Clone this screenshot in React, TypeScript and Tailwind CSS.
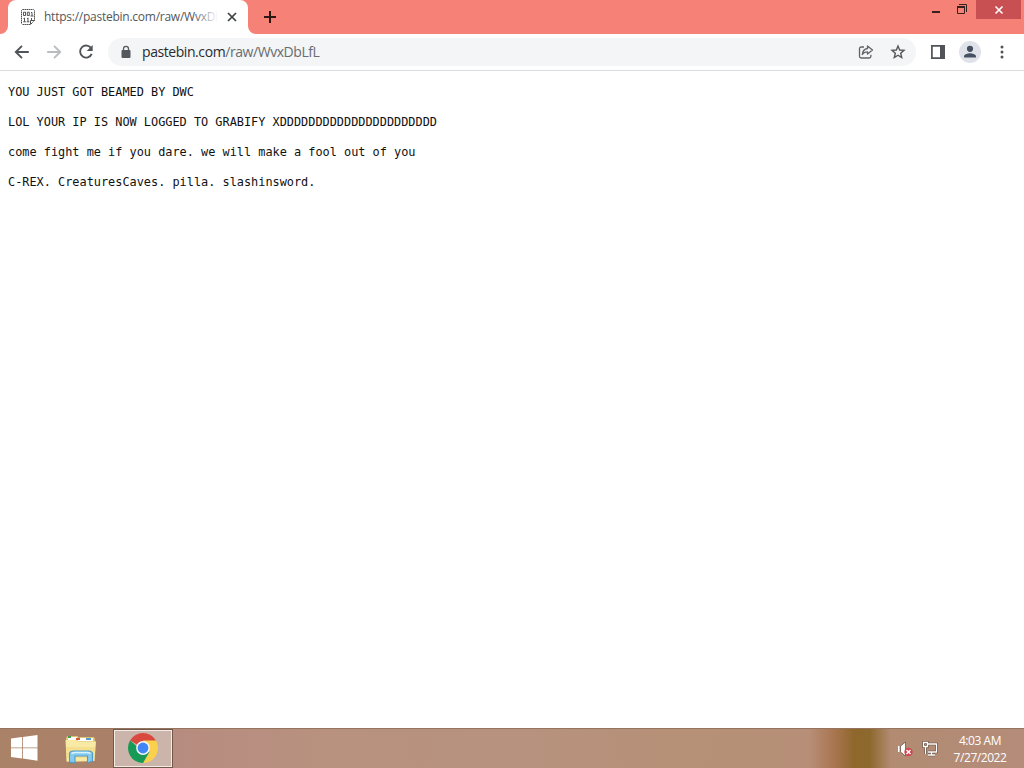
import React from 'react';

const lines = [
  'YOU JUST GOT BEAMED BY DWC',
  'LOL YOUR IP IS NOW LOGGED TO GRABIFY X' + 'D'.repeat(22),
  'come fight me if you dare. we will make a fool out of you',
  'C-REX. CreaturesCaves. pilla. slashinsword.',
];

function Favicon() {
  return (
    <svg width="16" height="18" viewBox="0 0 16 18" className="shrink-0" fill="none" stroke="#4b4b4b">
      <path d="M2.500 1.500h11l1 1v10l-4 4h-8l-1-1v-13z" strokeWidth="1" strokeDasharray="1.500 .5" />
      <path d="M10.500 16v-3.500h4" />
      <path
        d="M3.500 4.200h2v3.300h-2zM7.300 4.200h2v3.300h-2zM11 4.500h1v3.500M10.500 8h3M4.500 9.800v4M3.200 13.800h2.600M3.500 10.500h1M8 9.800v4M6.700 13.800h2.600M7 10.500h1M11.500 10v2"
        strokeWidth="0.95"
      />
    </svg>
  );
}

function TabStrip() {
  return (
    <header className="flex h-[34px] shrink-0 items-start bg-[#f58177]">
      <svg width="8" height="34" viewBox="0 0 8 34" className="shrink-0">
        <path d="M8 26a8 8 0 0 1-8 8h8z" fill="#fff" />
      </svg>
      <div className="flex h-[34px] w-[240px] shrink-0 items-center rounded-t-lg bg-white pl-3">
        <Favicon />
        <div className="relative ml-2 h-5 w-[174px] overflow-hidden whitespace-nowrap text-[12px] leading-5 tracking-[-0.25px] text-[#54575b]">
          https://pastebin.com/raw/WvxDb
          <div className="absolute inset-y-0 right-0 w-6 bg-gradient-to-r from-transparent to-white" />
        </div>
        <svg width="12" height="12" viewBox="0 0 12 12" className="ml-[8px] shrink-0" stroke="#3c4043" strokeWidth="1.7">
          <path d="M2 2l8 8M10 2l-8 8" />
        </svg>
      </div>
      <svg width="8" height="34" viewBox="0 0 8 34" className="shrink-0">
        <path d="M0 26a8 8 0 0 0 8 8H0z" fill="#fff" />
      </svg>
      <svg width="14" height="14" viewBox="0 0 14 14" className="ml-[7px] mt-[10px]" stroke="#2d1715" strokeWidth="2">
        <path d="M7 1v12M1 7h12" />
      </svg>
      <div className="ml-auto flex h-5 items-start">
        <svg width="46" height="20" viewBox="0 0 46 20" fill="none" stroke="#37201d">
          <path d="M2 12h8" strokeWidth="2" />
          <path d="M27.500 6.500h7v7h-7z" strokeWidth="1" />
          <path d="M27 7h8" strokeWidth="2" />
          <path d="M29 4.500h7.500v7.500" strokeWidth="1" />
        </svg>
        <div className="flex h-[19px] w-[45px] items-center justify-center bg-[#c95052]">
          <svg width="10" height="10" viewBox="0 0 10 10" stroke="#fff" strokeWidth="1.6">
            <path d="M1.500 1.500l7 7M8.500 1.500l-7 7" />
          </svg>
        </div>
        <div className="w-[3px]" />
      </div>
    </header>
  );
}

function Toolbar() {
  return (
    <nav className="flex h-[37px] shrink-0 items-center border-b border-[#dcdddf] bg-white pl-[13px]">
      <svg width="18" height="18" viewBox="0 0 18 18" fill="none" stroke="#505357" strokeWidth="1.9">
        <path d="M15.800 9H3M9 2.800L2.800 9 9 15.200" />
      </svg>
      <svg width="18" height="18" viewBox="0 0 18 18" className="ml-[14px]" fill="none" stroke="#babcbe" strokeWidth="1.9">
        <path d="M2.200 9H15M9 2.800L15.200 9 9 15.200" />
      </svg>
      <svg width="18" height="18" viewBox="0 0 18 18" className="ml-[14px]" fill="none" stroke="#505357" strokeWidth="1.9">
        <path d="M14.300 5.500A6 6 0 1 0 14.700 10.800" />
        <path d="M15.700 2v6H9.700z" fill="#505357" stroke="none" />
      </svg>
      <div className="ml-[13px] flex h-7 w-[808px] items-center rounded-full bg-[#f3f5f6] pl-[12px] pr-[10px]">
        <svg width="12" height="14" viewBox="0 0 12 14" fill="none">
          <rect x="1.500" y="5" width="9" height="8" rx="1" fill="#54575b" />
          <path d="M3.500 5.500V3.800a2.500 2.500 0 0 1 5 0v1.700" stroke="#54575b" strokeWidth="1.3" />
        </svg>
        <div className="ml-[10px] whitespace-nowrap text-[14px] leading-5 tracking-[-0.43px] text-[#696c70]">
          <span className="text-[#292b2e]">pastebin.com</span>/raw/WvxDbLfL
        </div>
        <svg width="16" height="16" viewBox="0 0 16 16" className="ml-auto" fill="none" stroke="#606368" strokeWidth="1.3" strokeLinejoin="round">
          <path d="M6 3H3.200A1.700 1.700 0 0 0 1.500 4.700v7.600A1.700 1.700 0 0 0 3.200 14h8a1.700 1.700 0 0 0 1.700-1.700v-1.500" />
          <path d="M9.500 2l5 4-5 4V7.800C7 7.800 5.500 8.700 4.300 10.500c.3-3 2-5.500 5.200-6z" />
        </svg>
        <svg width="16" height="16" viewBox="0 0 16 16" className="ml-4" fill="none" stroke="#55585c" strokeWidth="1.4" strokeLinejoin="miter">
          <path d="M8 2l1.650 4.050 4.350.35-3.300 2.850 1 4.250L8 11.250 4.300 13.500l1-4.250L2 6.400l4.350-.35z" />
        </svg>
      </div>
      <svg width="14" height="14" viewBox="0 0 14 14" className="ml-[15px]" fill="none">
        <path d="M.9.9h12.200v12.200H.9z" stroke="#505357" strokeWidth="1.700" />
        <path d="M9 0h5v14H9z" fill="#505357" />
      </svg>
      <svg width="22" height="22" viewBox="0 0 22 22" className="ml-[14px]">
        <circle cx="11" cy="11" r="11" fill="#dfe3e9" />
        <circle cx="11" cy="7.800" r="3.100" fill="#465063" />
        <path d="M5 16.500v-1.300c0-2 4-3 6-3s6 1 6 3v1.300z" fill="#465063" />
      </svg>
      <svg width="4" height="16" viewBox="0 0 4 16" className="ml-[19px]" fill="#505357">
        <circle cx="2" cy="3" r="1.500" />
        <circle cx="2" cy="8" r="1.500" />
        <circle cx="2" cy="13" r="1.500" />
      </svg>
    </nav>
  );
}

function WindowsIcon() {
  return (
    <svg width="28" height="28" viewBox="0 0 28 28" fill="#fff">
      <path d="M1 4.500L12 3v10.500H1zM12.800 2.900L27.500 1v12.500H12.800zM1 14.300h11v10.200L1 23zM12.800 14.300h14.700v12.500l-14.700-2.200z" />
    </svg>
  );
}

function ExplorerIcon() {
  return (
    <svg width="34" height="30" viewBox="0 0 34 30">
      <path d="M2 4l1.500-2h10l1.500 2 1-1h14l1 2-1.500 22-26 1z" fill="#dfc66e" />
      <path d="M4 3h9v3H4zM14 4h15v3H14z" fill="#fff" />
      <path d="M4 2h3v2H4z" fill="#469c51" />
      <path d="M12 4h4v2h-4z" fill="#d75a3c" />
      <path d="M22 4h5v2h-5z" fill="#509bd3" />
      <path d="M1.500 6h11l2 1.500H32L30.500 27l-28 .5z" fill="#f8e9a4" />
      <path d="M2 13h29l-.5 11H2.500z" fill="#f1d77b" opacity=".55" />
      <path d="M5.500 27v-7q0-3 4-3h15q4 0 4 3v7l-5 2v-7H11v7l-5.500-1z" fill="#86cbee" stroke="#4d9bcc" strokeWidth="1.100" />
      <path d="M8 20q0-1.500 3-1.500h12q3 0 3 1.500" fill="none" stroke="#d7f4ff" strokeWidth="1.500" />
    </svg>
  );
}

function ChromeIcon() {
  return (
    <svg width="30" height="30" viewBox="0 0 30 30">
      <path d="M15 15L2.010 7.500A15 15 0 0 1 27.990 7.500z" fill="#d9493d" />
      <path d="M15 7.500h12.990A15 15 0 0 1 15 30l6.500-11.250z" fill="#fbd04b" />
      <path d="M2.010 7.500A15 15 0 0 0 15 30l6.500-11.250-6.500 0z" fill="#169a55" />
      <circle cx="15" cy="15" r="6.900" fill="#f4f6fa" />
      <circle cx="15" cy="15" r="5.400" fill="#4285f4" />
    </svg>
  );
}

function Taskbar() {
  return (
    <footer className="flex h-10 shrink-0 items-center border-t border-[#94745f] bg-[linear-gradient(90deg,#aa8268_0%,#aa8168_11%,#b78c80_17%,#b8917f_32%,#b7927f_50%,#b69077_65%,#b78f78_79%,#a97550_81.500%,#8d672b_83.500%,#8e692e_85%,#b28b72_87%,#b48c79_100%)]">
      <div className="flex w-12 justify-center pb-[2px]"><WindowsIcon /></div>
      <div className="flex w-[65px] justify-center"><ExplorerIcon /></div>
      <div className="flex h-[39px] w-[60px] items-center justify-center border border-[#71584b] bg-[#cbb4a9] pb-[2px] shadow-[inset_0_0_0_1px_#f2ebe6]">
        <ChromeIcon />
      </div>
      <div className="ml-auto flex items-center">
        <svg width="17" height="18" viewBox="0 0 17 18">
          <path d="M1 6h1.500v6H1z" fill="#fff" />
          <path d="M3.500 6L8.500 2v14l-5-4z" fill="#fff" stroke="#6e5549" strokeWidth=".8" />
          <circle cx="11.500" cy="12" r="4.200" fill="#cf4650" />
          <path d="M9.500 10l4 4M13.500 10l-4 4" stroke="#fff" strokeWidth="1.400" />
        </svg>
        <svg width="18" height="18" viewBox="0 0 18 18" className="ml-[7px]" fill="none">
          <path d="M7 4h8.500v8H7M10.500 12v3M7 15h7M2.500 2.500h4v4h-4zM4.500 7v7" stroke="#604b3e" strokeWidth="2.600" />
          <path d="M7 4h8.500v8H7M10.500 12v3M7 15h7M2.500 2.500h4v4h-4zM4.500 7v7" stroke="#fff" strokeWidth="1.300" />
        </svg>
        <div className="ml-[11px] mr-[14px] w-[60px] whitespace-nowrap text-center text-[12px] leading-[17px] tracking-[-0.45px] text-white">
          <div>4:03 AM</div>
          <div>7/27/2022</div>
        </div>
      </div>
    </footer>
  );
}

export default function App() {
  return (
    <div className="flex h-[768px] w-[1024px] flex-col overflow-hidden bg-white font-['Open_Sans','Noto_Sans',sans-serif]">
      <TabStrip />
      <Toolbar />
      <main className="flex-1 px-2 pt-[14px]">
        <pre className="font-['DejaVu_Sans_Mono',monospace] text-[11.88px] leading-[15px] text-[#111]">
          {lines.join('\n\n')}
        </pre>
      </main>
      <Taskbar />
    </div>
  );
}
